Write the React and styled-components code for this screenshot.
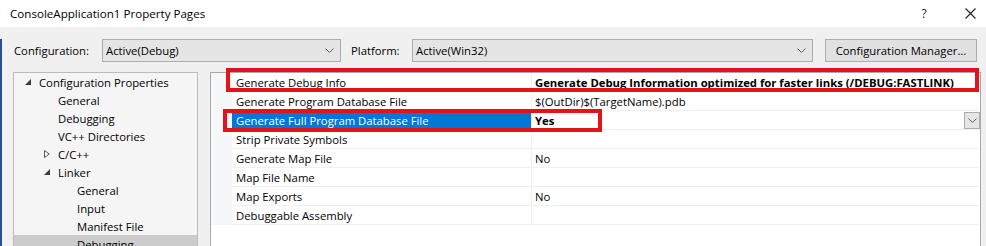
import React from "react";
import styled, { createGlobalStyle } from "styled-components";

const GlobalStyle = createGlobalStyle`
  html, body {
    margin: 0;
    padding: 0;
    background: #f0f0f0;
  }
  body {
    font-family: "Open Sans", "Noto Sans", "Liberation Sans", sans-serif;
    font-size: 11.3px;
    color: #000;
  }
`;

const Window = styled.div`
  position: relative;
  width: 986px;
  height: 246px;
  overflow: hidden;
  background: #f0f0f0;
`;

const TitleBar = styled.div`
  height: 27px;
  background: #fff;
  display: flex;
  align-items: center;
  padding: 0 6px 0 10px;
`;

const Title = styled.div`
  flex: 1;
  font-size: 11.6px;
  color: #000;
`;

const TitleButtons = styled.div`
  display: flex;
  align-items: center;
  gap: 26px;
`;

const TitleButton = styled.div`
  width: 20px;
  height: 20px;
  display: flex;
  align-items: center;
  justify-content: center;
  font-size: 12px;
  color: #222;
`;

const Body = styled.div`
  border-left: 2px solid #24508f;
  height: 219px;
`;

const Toolbar = styled.div`
  display: flex;
  align-items: center;
  height: 23px;
  margin-top: 12px;
  padding-left: 12px;
`;

const Label = styled.div`
  width: ${(p) => p.$width}px;
  flex-shrink: 0;
`;

const Select = styled.div`
  width: ${(p) => p.$width}px;
  height: 23px;
  box-sizing: border-box;
  margin-right: ${(p) => p.$gap}px;
  background: #e5e5e5;
  border: 1px solid #adadad;
  display: flex;
  align-items: center;
  padding: 0 6px 0 3px;
  justify-content: space-between;
`;

const Button = styled.div`
  width: 152px;
  height: 23px;
  box-sizing: border-box;
  background: #e1e1e1;
  border: 1px solid #adadad;
  display: flex;
  align-items: center;
  justify-content: center;
`;

const Main = styled.div`
  display: flex;
  gap: 12px;
  margin-top: 10px;
  padding-left: 11px;
`;

const Tree = styled.div`
  width: 185px;
  height: 200px;
  box-sizing: border-box;
  border: 1px solid #bcbcbc;
  background: #f5f5f5;
`;

const TreeRow = styled.div`
  height: 18px;
  display: flex;
  align-items: center;
  padding-left: ${(p) => 11 + 19 * p.$level}px;
  background: ${(p) => (p.$selected ? "#cccccc" : "transparent")};
`;

const Expander = styled.div`
  width: 14px;
  flex-shrink: 0;
  display: flex;
  align-items: center;
`;

const Grid = styled.div`
  width: 771px;
  height: 200px;
  box-sizing: border-box;
  border: 1px solid #a9a9a9;
  background: #fff;
`;

const GridRow = styled.div`
  display: grid;
  grid-template-columns: 21px 300px 1fr;
  height: 19px;
`;

const MarginCell = styled.div`
  background: #f6f7f9;
`;

const NameCell = styled.div`
  box-sizing: border-box;
  border-bottom: 1px solid #f0f0f0;
  border-right: 1px solid #f0f0f0;
  padding-left: 4px;
  display: flex;
  align-items: center;
  background: ${(p) => (p.$selected ? "#0078d7" : "#fff")};
  color: ${(p) => (p.$selected ? "#fff" : "#000")};
`;

const ValueCell = styled.div`
  box-sizing: border-box;
  border-bottom: 1px solid #f0f0f0;
  padding-left: 3px;
  display: flex;
  align-items: center;
  font-weight: ${(p) => (p.$bold ? 700 : 400)};
  white-space: nowrap;
`;

const DropButton = styled.div`
  margin-left: auto;
  width: 16px;
  height: 17px;
  box-sizing: border-box;
  background: #e5e5e5;
  border: 1px solid #acacac;
  display: flex;
  align-items: center;
  justify-content: center;
`;

const Highlight = styled.div`
  position: absolute;
  left: ${(p) => p.$left}px;
  top: ${(p) => p.$top}px;
  width: ${(p) => p.$width}px;
  height: ${(p) => p.$height}px;
  box-sizing: border-box;
  border: 4px solid #e3121c;
  pointer-events: none;
`;

const Chevron = () => (
  <svg width="9" height="5" viewBox="0 0 9 5">
    <polyline points="0.5,0.5 4.5,4.5 8.5,0.5" fill="none" stroke="#606060" strokeWidth="1" />
  </svg>
);

const CloseIcon = () => (
  <svg width="11" height="11" viewBox="0 0 11 11">
    <path d="M0.5 0.5 L10.5 10.5 M10.5 0.5 L0.5 10.5" stroke="#222" strokeWidth="1.1" />
  </svg>
);

const Arrow = ({ open }) =>
  open ? (
    <svg width="6" height="6" viewBox="0 0 6 6">
      <polygon points="6,0 6,6 0,6" fill="#3a3a3a" />
    </svg>
  ) : (
    <svg width="6" height="8" viewBox="0 0 6 8">
      <polygon points="0.5,0.5 5.3,4 0.5,7.5" fill="none" stroke="#5a5a5a" strokeWidth="1" />
    </svg>
  );

const treeItems = [
  { label: "Configuration Properties", level: 0, arrow: "open" },
  { label: "General", level: 1 },
  { label: "Debugging", level: 1 },
  { label: "VC++ Directories", level: 1 },
  { label: "C/C++", level: 1, arrow: "closed" },
  { label: "Linker", level: 1, arrow: "open" },
  { label: "General", level: 2 },
  { label: "Input", level: 2 },
  { label: "Manifest File", level: 2 },
  { label: "Debugging", level: 2, selected: true },
];

const properties = [
  { name: "Generate Debug Info", value: "Generate Debug Information optimized for faster links (/DEBUG:FASTLINK)", bold: true },
  { name: "Generate Program Database File", value: "$(OutDir)$(TargetName).pdb" },
  { name: "Generate Full Program Database File", value: "Yes", bold: true, selected: true },
  { name: "Strip Private Symbols", value: "" },
  { name: "Generate Map File", value: "No" },
  { name: "Map File Name", value: "" },
  { name: "Map Exports", value: "No" },
  { name: "Debuggable Assembly", value: "" },
];

export default function App() {
  return (
    <Window>
      <GlobalStyle />
      <TitleBar>
        <Title>ConsoleApplication1 Property Pages</Title>
        <TitleButtons>
          <TitleButton>?</TitleButton>
          <TitleButton>
            <CloseIcon />
          </TitleButton>
        </TitleButtons>
      </TitleBar>
      <Body>
        <Toolbar>
          <Label $width={88}>Configuration:</Label>
          <Select $width={239} $gap={10}>
            <span>Active(Debug)</span>
            <Chevron />
          </Select>
          <Label $width={61}>Platform:</Label>
          <Select $width={401} $gap={12}>
            <span>Active(Win32)</span>
            <Chevron />
          </Select>
          <Button>Configuration Manager...</Button>
        </Toolbar>
        <Main>
          <Tree>
            {treeItems.map((item, i) => (
              <TreeRow key={i} $level={item.level} $selected={item.selected}>
                <Expander>{item.arrow && <Arrow open={item.arrow === "open"} />}</Expander>
                <span>{item.label}</span>
              </TreeRow>
            ))}
          </Tree>
          <Grid>
            {properties.map((prop) => (
              <GridRow key={prop.name}>
                <MarginCell />
                <NameCell $selected={prop.selected}>{prop.name}</NameCell>
                <ValueCell $bold={prop.bold}>
                  {prop.value}
                  {prop.selected && (
                    <DropButton>
                      <Chevron />
                    </DropButton>
                  )}
                </ValueCell>
              </GridRow>
            ))}
          </Grid>
        </Main>
      </Body>
      <Highlight $left={226} $top={68} $width={753} $height={24} />
      <Highlight $left={223} $top={109} $width={379} $height={23} />
    </Window>
  );
}
